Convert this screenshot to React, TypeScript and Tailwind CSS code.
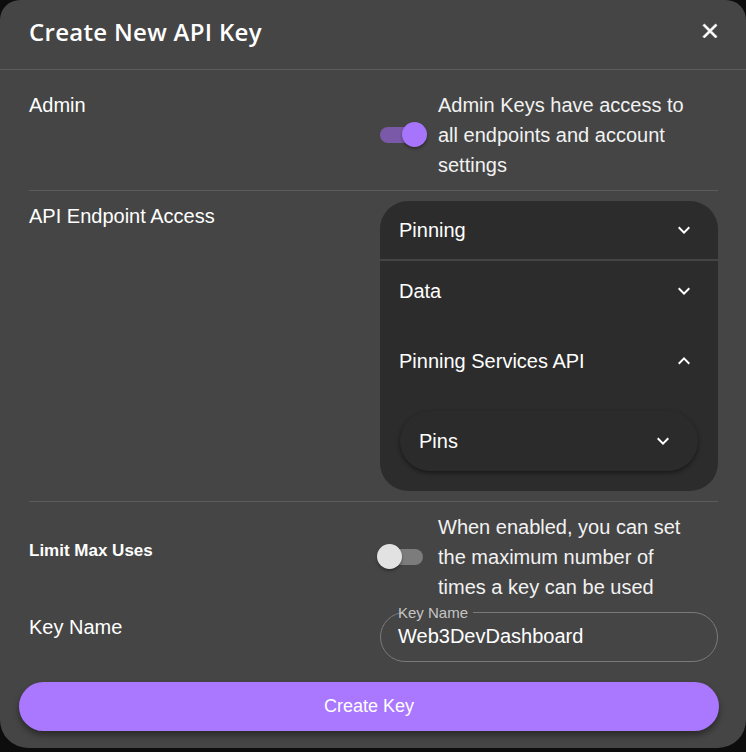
import { useState } from 'react';

const ExpandMore = ({ up = false }: { up?: boolean }) => (
  <svg width="24" height="24" viewBox="0 0 24 24" fill="#ffffff">
    {up ? (
      <path d="m12 8-6 6 1.41 1.41L12 10.83l4.59 4.58L18 14z" />
    ) : (
      <path d="M16.59 8.59 12 13.17 7.41 8.59 6 10l6 6 6-6z" />
    )}
  </svg>
);

const Toggle = ({ on }: { on: boolean }) => (
  <div className="relative w-[48px] h-[26px] shrink-0">
    <div
      className={
        on
          ? "absolute left-0 top-[5px] w-[43px] h-[16px] rounded-full bg-[#7a5aa8]"
          : "absolute left-0 top-[5px] w-[43px] h-[16px] rounded-full bg-[#7c7c7c]"
      }
    />
    <div
      className={
        on
          ? "absolute top-0 left-[22px] w-[25px] h-[25px] rounded-full bg-[#a675fb] shadow-[0_2px_3px_rgba(0,0,0,0.35)]"
          : "absolute top-0 left-[-3px] w-[25px] h-[25px] rounded-full bg-[#e2e2e2] shadow-[0_2px_3px_rgba(0,0,0,0.35)]"
      }
    />
  </div>
);

export default function App() {
  const [admin] = useState(true);
  const [limit] = useState(false);

  return (
    <div className="w-[746px] h-[752px] bg-[#0d0d0d] font-['Liberation_Sans',Arial,sans-serif]">
      <div className="h-[748px] bg-[#454545] rounded-t-[20px] rounded-b-[28px] flex flex-col text-white">
        {/* header */}
        <div className="h-[70px] shrink-0 flex items-center justify-between pl-[29px] pr-[24px] pb-[6px] border-b border-[#5c5c5c]">
          <h2 className="font-['Open_Sans',sans-serif] text-[24px] font-semibold tracking-[0.3px] text-white">Create New API Key</h2>
          <svg width="24" height="24" viewBox="0 0 24 24" fill="#ffffff" className="mb-[2px]">
            <path
              d="M19 6.41 17.59 5 12 10.59 6.41 5 5 6.41 10.59 12 5 17.59 6.41 19 12 13.41 17.59 19 19 17.59 13.41 12z"
              stroke="#ffffff"
              strokeWidth="0.8"
            />
          </svg>
        </div>

        <div className="px-[29px] pr-[28px]">
          {/* admin */}
          <div className="grid grid-cols-[351px_1fr] pt-[20px] pb-[10px] border-b border-[#5c5c5c]">
            <div className="text-[20px] leading-[30px]">Admin</div>
            <div className="flex items-center gap-[10px]">
              <Toggle on={admin} />
              <p className="w-[260px] text-[20px] leading-[30px] text-[#f2f2f2]">
                Admin Keys have access to all endpoints and account settings
              </p>
            </div>
          </div>

          {/* endpoint access */}
          <div className="grid grid-cols-[351px_1fr] pt-[10px] pb-[10px] border-b border-[#5c5c5c]">
            <div className="text-[20px] leading-[30px]">API Endpoint Access</div>
            <div className="bg-[#2c2c2c] rounded-[28px] overflow-hidden">
              <div className="h-[60px] flex items-center justify-between pl-[19px] pr-[22px] border-b-2 border-[#454545]">
                <span className="text-[20px]">Pinning</span>
                <ExpandMore />
              </div>
              <div className="h-[60px] flex items-center justify-between pl-[19px] pr-[22px]">
                <span className="text-[20px]">Data</span>
                <ExpandMore />
              </div>
              <div className="mt-[8px] h-[64px] flex items-center justify-between pl-[19px] pr-[22px]">
                <span className="text-[20px]">Pinning Services API</span>
                <ExpandMore up />
              </div>
              <div className="px-[20px] pt-[18px] pb-[20px]">
                <div className="h-[60px] bg-[#2b2b2b] rounded-[30px] flex items-center justify-between pl-[19px] pr-[23px] shadow-[0_2px_4px_rgba(0,0,0,0.45)]">
                  <span className="text-[20px]">Pins</span>
                  <ExpandMore />
                </div>
              </div>
            </div>
          </div>

          {/* limit max uses */}
          <div className="grid grid-cols-[351px_1fr] pt-[10px]">
            <div className="pt-[27px] text-[17px] leading-[24px] font-bold">Limit Max Uses</div>
            <div className="flex items-center gap-[10px]">
              <Toggle on={limit} />
              <p className="w-[260px] text-[20px] leading-[30px] text-[#f2f2f2]">
                When enabled, you can set the maximum number of times a key can be used
              </p>
            </div>
          </div>

          {/* key name */}
          <div className="grid grid-cols-[351px_1fr] pt-[10px]">
            <div className="text-[20px] leading-[30px]">Key Name</div>
            <fieldset className="h-[50px] border border-[#7a7a7a] rounded-[25px] pl-[12px] pr-[17px] m-0 min-w-0">
              <legend className="px-[5px] text-[15px] leading-[0px] text-[#c4c4c4]">Key Name</legend>
              <div className="pl-[5px] mt-[8px] text-[20px] leading-[30px] text-white">Web3DevDashboard</div>
            </fieldset>
          </div>
        </div>

        {/* button */}
        <div className="px-[19px] pr-[27px] pt-[20px]">
          <button className="w-full h-[49px] rounded-full bg-[#aa77ff] text-white text-[18px] shadow-[0_4px_6px_rgba(0,0,0,0.4)]">
            Create Key
          </button>
        </div>
      </div>
    </div>
  );
}
